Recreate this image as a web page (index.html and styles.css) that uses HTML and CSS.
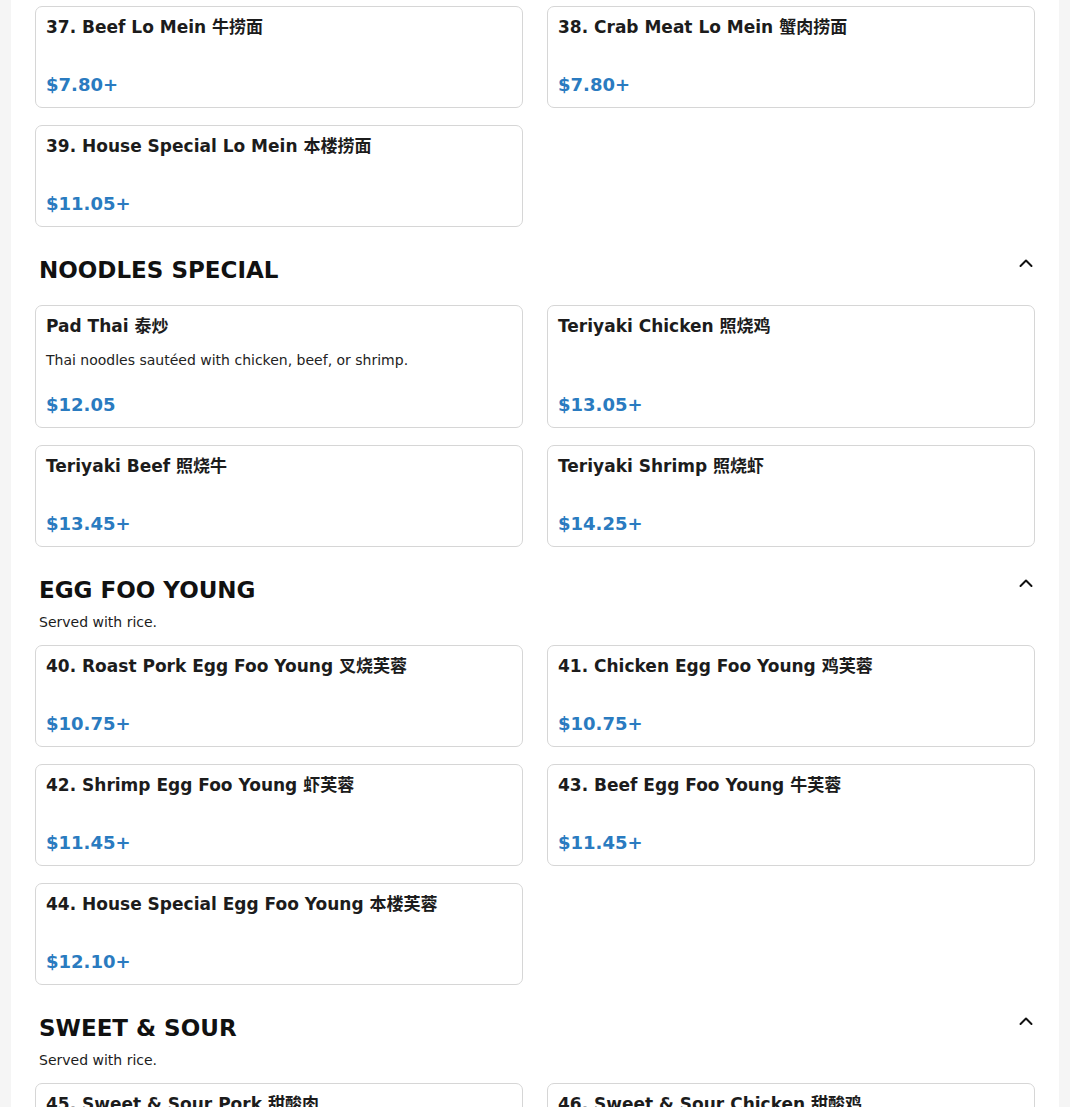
FILE: index.html
```html
<!DOCTYPE html>
<html lang="en">
<head>
<meta charset="utf-8">
<title>Menu</title>
<link rel="stylesheet" href="styles.css">
</head>
<body>
<main class="page">
  <section class="section first">
    <div class="grid">
      <article class="card"><h3 class="item-name">37. Beef Lo Mein 牛捞面</h3><p class="price">$7.80+</p></article>
      <article class="card"><h3 class="item-name">38. Crab Meat Lo Mein 蟹肉捞面</h3><p class="price">$7.80+</p></article>
      <article class="card"><h3 class="item-name">39. House Special Lo Mein 本楼捞面</h3><p class="price">$11.05+</p></article>
    </div>
  </section>

  <section class="section">
    <header class="section-head">
      <h2 class="section-title">NOODLES SPECIAL</h2>
      <svg class="chevron" viewBox="0 0 16 16" width="16" height="16" aria-hidden="true"><path d="M2.5 11 L8 5.5 L13.5 11" fill="none" stroke="#111" stroke-width="2" stroke-linecap="round" stroke-linejoin="round"/></svg>
    </header>
    <div class="grid">
      <article class="card"><h3 class="item-name">Pad Thai 泰炒</h3><p class="item-desc">Thai noodles sautéed with chicken, beef, or shrimp.</p><p class="price">$12.05</p></article>
      <article class="card"><h3 class="item-name">Teriyaki Chicken 照烧鸡</h3><p class="price">$13.05+</p></article>
      <article class="card"><h3 class="item-name">Teriyaki Beef 照烧牛</h3><p class="price">$13.45+</p></article>
      <article class="card"><h3 class="item-name">Teriyaki Shrimp 照烧虾</h3><p class="price">$14.25+</p></article>
    </div>
  </section>

  <section class="section">
    <header class="section-head">
      <h2 class="section-title">EGG FOO YOUNG</h2>
      <svg class="chevron" viewBox="0 0 16 16" width="16" height="16" aria-hidden="true"><path d="M2.5 11 L8 5.5 L13.5 11" fill="none" stroke="#111" stroke-width="2" stroke-linecap="round" stroke-linejoin="round"/></svg>
    </header>
    <p class="section-desc">Served with rice.</p>
    <div class="grid">
      <article class="card"><h3 class="item-name">40. Roast Pork Egg Foo Young 叉烧芙蓉</h3><p class="price">$10.75+</p></article>
      <article class="card"><h3 class="item-name">41. Chicken Egg Foo Young 鸡芙蓉</h3><p class="price">$10.75+</p></article>
      <article class="card"><h3 class="item-name">42. Shrimp Egg Foo Young 虾芙蓉</h3><p class="price">$11.45+</p></article>
      <article class="card"><h3 class="item-name">43. Beef Egg Foo Young 牛芙蓉</h3><p class="price">$11.45+</p></article>
      <article class="card"><h3 class="item-name">44. House Special Egg Foo Young 本楼芙蓉</h3><p class="price">$12.10+</p></article>
    </div>
  </section>

  <section class="section">
    <header class="section-head">
      <h2 class="section-title">SWEET &amp; SOUR</h2>
      <svg class="chevron" viewBox="0 0 16 16" width="16" height="16" aria-hidden="true"><path d="M2.5 11 L8 5.5 L13.5 11" fill="none" stroke="#111" stroke-width="2" stroke-linecap="round" stroke-linejoin="round"/></svg>
    </header>
    <p class="section-desc">Served with rice.</p>
    <div class="grid">
      <article class="card"><h3 class="item-name">45. Sweet &amp; Sour Pork 甜酸肉</h3><p class="price">$11.45+</p></article>
      <article class="card"><h3 class="item-name">46. Sweet &amp; Sour Chicken 甜酸鸡</h3><p class="price">$11.45+</p></article>
    </div>
  </section>
</main>
</body>
</html>
```

FILE: styles.css
```css
* { box-sizing: border-box; }

html, body {
  margin: 0;
  padding: 0;
}

body {
  background: #f5f5f5;
  font-family: "DejaVu Sans", "Noto Sans CJK SC", sans-serif;
  color: #1c1c1c;
}

.page {
  margin: 0 11px;
  background: #ffffff;
  padding: 6px 24px 40px;
  min-height: 1107px;
}

.section {
  padding-top: 28px;
}

.section.first {
  padding-top: 0;
}

.section-head {
  display: flex;
  justify-content: space-between;
  align-items: flex-start;
  padding: 0 1px 0 4px;
}

.section-title {
  margin: 0;
  font-size: 23px;
  line-height: 30px;
  font-weight: 700;
  color: #111;
}

.chevron {
  display: block;
  margin-top: 0;
}

.section-desc {
  margin: 7px 0 0;
  padding-left: 4px;
  font-size: 14px;
  line-height: 20px;
  color: #1c1c1c;
}

.grid {
  display: grid;
  grid-template-columns: 1fr 1fr;
  column-gap: 24px;
  row-gap: 17px;
  margin-top: 13px;
}

.section-head + .grid {
  margin-top: 20px;
}

.section.first .grid {
  margin-top: 0;
}

.card {
  display: flex;
  flex-direction: column;
  min-height: 102px;
  padding: 10px 10px;
  border: 1px solid #d6d6d6;
  border-radius: 7px;
  background: #fff;
}

.item-name {
  margin: 0;
  font-size: 17px;
  line-height: 20px;
  font-weight: 700;
  color: #1c1c1c;
}

.item-desc {
  margin: 14px 0 0;
  font-size: 14px;
  line-height: 20px;
  color: #222;
}

.price {
  margin: auto 0 0;
  padding-top: 23px;
  font-size: 18px;
  line-height: 24px;
  font-weight: 700;
  color: #2a7bc0;
}
```
